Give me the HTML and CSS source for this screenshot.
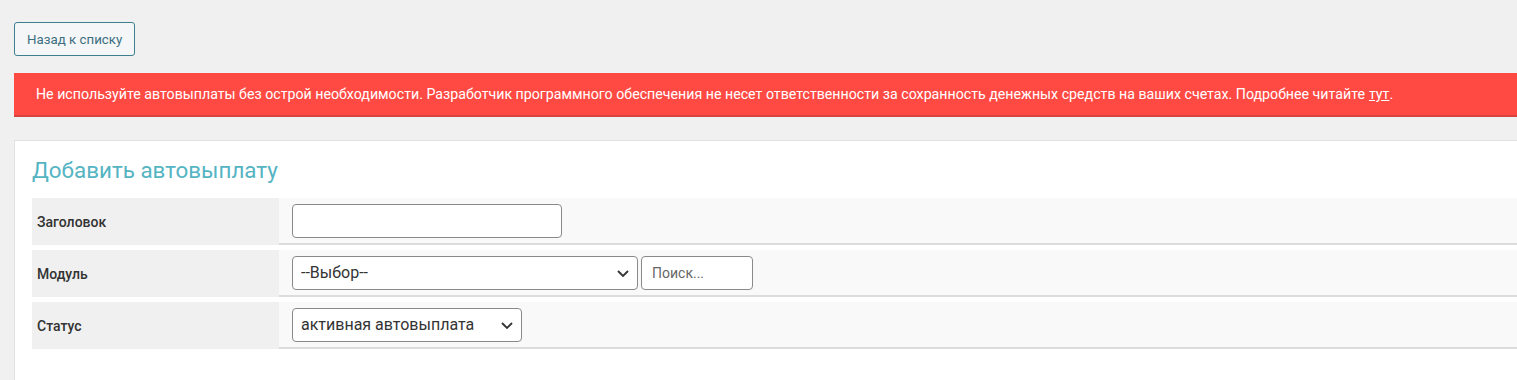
FILE: index.html
```html
<!DOCTYPE html>
<html lang="ru">
<head>
<meta charset="utf-8">
<title>Добавить автовыплату</title>
<link rel="stylesheet" href="styles.css">
</head>
<body>
<div class="page">
  <div class="toolbar">
    <a class="btn-back" href="#">Назад к списку</a>
  </div>
  <div class="alert">Не используйте автовыплаты без острой необходимости. Разработчик программного обеспечения не несет ответственности за сохранность денежных средств на ваших счетах. Подробнее читайте <a href="#" class="alert-link">тут</a>.</div>
  <div class="panel">
    <h2 class="panel-title">Добавить автовыплату</h2>
    <div class="form">
      <div class="row">
        <div class="label">Заголовок</div>
        <div class="value"><input class="field field-title" type="text"></div>
      </div>
      <div class="row">
        <div class="label">Модуль</div>
        <div class="value">
          <div class="select-wrap select-module">
            <select class="select"><option>--Выбор--</option></select>
            <svg class="chev" width="12" height="7" viewBox="0 0 12 7"><path d="M1 1l5 5 5-5" fill="none" stroke="#333" stroke-width="1.8"/></svg>
          </div>
          <input class="field field-search" type="text" placeholder="Поиск...">
        </div>
      </div>
      <div class="row">
        <div class="label">Статус</div>
        <div class="value">
          <div class="select-wrap select-status">
            <select class="select"><option>активная автовыплата</option></select>
            <svg class="chev" width="12" height="7" viewBox="0 0 12 7"><path d="M1 1l5 5 5-5" fill="none" stroke="#333" stroke-width="1.8"/></svg>
          </div>
        </div>
      </div>
    </div>
  </div>
</div>
</body>
</html>
```
FILE: styles.css
```css
* { box-sizing: border-box; }
html, body { margin: 0; padding: 0; }
body {
  background: #f0f0f0;
  font-family: Roboto, "Liberation Sans", Arial, sans-serif;
  color: #333;
  overflow: hidden;
}
.page { padding: 22px 0 0 14px; }
.toolbar { display: flex; margin-bottom: 17px; }
.btn-back {
  display: inline-flex;
  align-items: center;
  height: 34px;
  padding: 0 12px 0 12px;
  border: 1px solid #3e7f8f;
  border-radius: 3px;
  background: #f4f6f8;
  color: #3d6f80;
  font-size: 13.3px;
  text-decoration: none;
}
.alert {
  height: 44px;
  background: #ff4a44;
  border-bottom: 2px solid #d64440;
  color: #fff;
  font-size: 14.2px;
  padding: 0 0 0 22px;
  display: flex;
  align-items: center;
  white-space: nowrap;
}
.alert-link { color: #fff; text-decoration: underline; margin-left: 4px; }
.panel {
  margin-top: 23px;
  background: #fff;
  border-top: 1px solid #e2e2e2;
  border-left: 1px solid #e2e2e2;
  padding: 16px 0 30px 17px;
  min-height: 240px;
}
.panel-title {
  margin: 0 0 15px;
  font-size: 22.4px;
  line-height: 26px;
  font-weight: 400;
  color: #55b4c2;
}
.form { display: flex; flex-direction: column; gap: 5px; }
.row { display: flex; height: 47px; }
.label {
  width: 247px;
  flex: none;
  background: #f0f0f0;
  display: flex;
  align-items: center;
  padding-left: 5px;
  font-size: 14px;
  font-weight: 500;
  color: #333;
}
.value {
  flex: 1;
  background: #f9f9f9;
  border-bottom: 2px solid #dcdcdc;
  display: flex;
  align-items: center;
  padding: 0 0 0 13px;
  gap: 3px;
}
.field {
  height: 34px;
  border: 1px solid #8a8a8a;
  border-radius: 4px;
  background: #fff;
  font-family: inherit;
  font-size: 14px;
  padding: 0 10px;
  color: #333;
}
.field-title { width: 270px; }
.field-search { width: 112px; }
.field-search::placeholder { color: #666; }
.select-wrap { position: relative; display: flex; }
.select {
  appearance: none;
  -webkit-appearance: none;
  height: 34px;
  width: 100%;
  border: 1px solid #8a8a8a;
  border-radius: 4px;
  background: #fff;
  font-family: inherit;
  font-size: 16px;
  color: #333;
  padding: 0 30px 0 8px;
}
.select-module { width: 346px; }
.select-status { width: 230px; }
.chev {
  position: absolute;
  right: 9px;
  top: 14px;
  pointer-events: none;
}
```
